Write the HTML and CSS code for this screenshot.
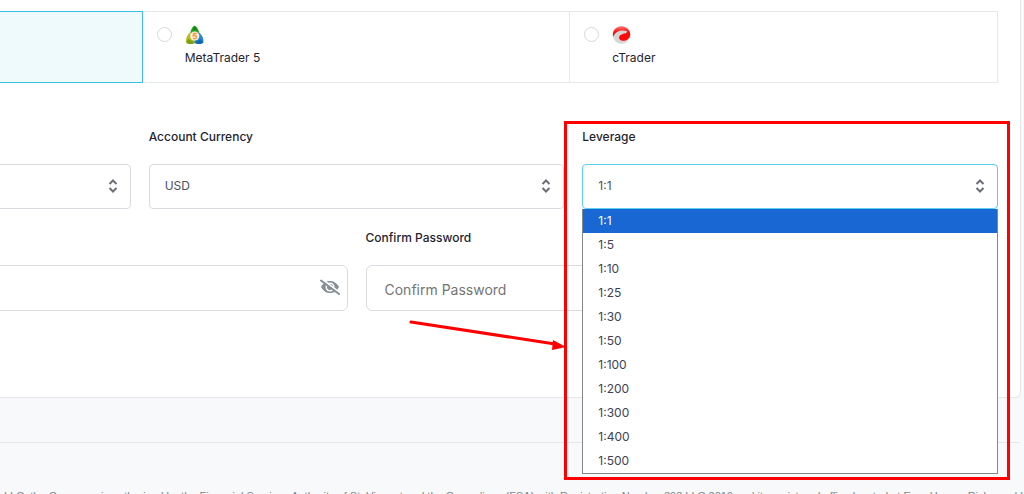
FILE: index.html
```html
<!DOCTYPE html>
<html lang="en">
<head>
    <meta charset="UTF-8">
    <meta name="viewport" content="width=device-width, initial-scale=1.0">
    <title>Open Account</title>
    <link rel="stylesheet" href="styles.css">
</head>
<body>
    <form class="card">
        <div class="platforms">
            <label class="platform active" aria-label="Platform">
                <input type="radio" name="platform" checked>
            </label>
            <label class="platform">
                <input type="radio" name="platform">
                <span class="platform-info">
                    <svg class="logo" viewBox="0 0 20 20">
                        <path d="M9.500 .8C7.500 1 5 6 5.200 10H14.500C14.500 6 11.500 .8 9.500 .8Z" fill="#2fa82b"/>
                        <path d="M7 5.500L9.500 .8L13.500 6.500L10 5Z" fill="#13870f"/>
                        <path d="M5 7.500C1.500 11 .3 15 1.300 17.500C3.500 19.500 7.500 19.300 10 18L9.500 9Z" fill="#b4bd1c"/>
                        <path d="M1.300 17.500L3 14L8 16.500L9.500 18.200C7 19.300 3.500 19.500 1.300 17.500Z" fill="#7d9f14"/>
                        <path d="M14 7.500C17.500 10.500 19 14 18.300 17.500C16 19.500 12 19.300 9.500 17.800L10 9Z" fill="#2489d8"/>
                        <path d="M18.300 17.500L16 14L11 16.500L10 18C12.500 19.300 16 19.500 18.300 17.500Z" fill="#1068b4"/>
                        <circle cx="9.700" cy="11" r="4.600" fill="#f8f1e8"/>
                        <path d="M11.800 8.500H8.600L8.300 10.800C10.300 10 11.800 10.900 11.500 12.300C11.200 13.800 9.200 14 8 13.200" fill="none" stroke="#f39a3c" stroke-width="1.500"/>
                    </svg>
                    MetaTrader 5
                </span>
            </label>
            <label class="platform">
                <input type="radio" name="platform">
                <span class="platform-info">
                    <svg class="logo" viewBox="0 0 20 20">
                        <defs>
                            <linearGradient id="ball" x1="0" y1="0" x2="0" y2="1">
                                <stop offset="0" stop-color="#f77"/>
                                <stop offset=".5" stop-color="#fa1010"/>
                            </linearGradient>
                        </defs>
                        <circle cx="9.500" cy="10" r="8.700" fill="#d6d6d6"/>
                        <path d="M.8 10C.8 5 4.500 1.300 9.500 1.300C14.500 1.300 18.200 5 18.200 9.500C18.200 10.500 18 11.500 17.500 12.500L15.500 6.500C9 4 3.500 6 1 12Z" fill="url(#ball)"/>
                        <path d="M15.500 6L18.200 9C18.400 13 15 16 11 15.800C8 15.700 6.500 13.500 7.300 11.500C8.200 9.300 12 9 14.500 7.800Z" fill="#fa0a0a"/>
                    </svg>
                    cTrader
                </span>
            </label>
        </div>

        <div class="row thirds">
            <div class="field">
                <div class="control">
                    <select aria-label="Account Type"><option></option></select>
                    <svg class="arrows" viewBox="0 0 10 14"><path d="M1.500 5L5 1.500L8.500 5M1.500 9L5 12.500L8.500 9"/></svg>
                </div>
            </div>
            <div class="field">
                <label for="currency">Account Currency</label>
                <div class="control">
                    <select id="currency"><option>USD</option></select>
                    <svg class="arrows" viewBox="0 0 10 14"><path d="M1.500 5L5 1.500L8.500 5M1.500 9L5 12.500L8.500 9"/></svg>
                </div>
            </div>
            <div class="field highlight">
                <label for="leverage">Leverage</label>
                <div class="control">
                    <select id="leverage" class="open"><option>1:1</option></select>
                    <svg class="arrows" viewBox="0 0 10 14"><path d="M1.500 5L5 1.500L8.500 5M1.500 9L5 12.500L8.500 9"/></svg>
                    <ul class="options" role="listbox" aria-label="Leverage">
                        <li role="option" class="selected" aria-selected="true">1:1</li>
                        <li role="option">1:5</li>
                        <li role="option">1:10</li>
                        <li role="option">1:25</li>
                        <li role="option">1:30</li>
                        <li role="option">1:50</li>
                        <li role="option">1:100</li>
                        <li role="option">1:200</li>
                        <li role="option">1:300</li>
                        <li role="option">1:400</li>
                        <li role="option">1:500</li>
                    </ul>
                </div>
                <svg class="pointer" viewBox="0 0 160 40">
                    <path d="M3 6L147 28" fill="none" stroke="#ff0000" stroke-width="3" stroke-linecap="round"/>
                    <path d="M145 24L158 31L144 34Z" fill="#ff0000"/>
                </svg>
            </div>
        </div>

        <div class="row halves">
            <div class="field">
                <div class="control">
                    <input type="password" aria-label="Password">
                    <button type="button" class="toggle" aria-label="Show password">
                        <svg viewBox="0 0 20 16">
                            <path d="M1 8C4 3 7 2 10 2S16 3 19 8C16 13 13 14 10 14S4 13 1 8Z" fill="#868e96"/>
                            <circle cx="10" cy="8" r="4.500" fill="#fff"/>
                            <circle cx="10" cy="8" r="3" fill="#868e96"/>
                            <path d="M1 -.5L20 14" stroke="#fff" stroke-width="2"/>
                            <path d="M1 1.500L19 15" stroke="#868e96" stroke-width="2" stroke-linecap="round"/>
                        </svg>
                    </button>
                </div>
            </div>
            <div class="field">
                <label for="confirm">Confirm Password</label>
                <div class="control">
                    <input type="password" id="confirm" placeholder="Confirm Password">
                </div>
            </div>
        </div>
    </form>

    <footer class="footer">
        <p>LLC, the Company, is authorised by the Financial Services Authority of St. Vincent and the Grenadines (FSA) with Registration Number 393 LLC 2019 and its registered office located at Euro House, Richmond Hill</p>
    </footer>
</body>
</html>
```

FILE: styles.css
```css
body {
    margin: 0;
    height: 100vh;
    overflow: hidden;
    background-color: #f8f9fb;
    font-family: Inter, 'Liberation Sans', sans-serif;
    font-size: 12px;
    color: #1f2430;
}

/* the form runs on past the left edge of the window */
.card {
    margin: 0 3px 0 -308px;
    padding: 11px 22px 86px;
    background-color: #fff;
    border: 1px solid #e5e7eb;
    border-top: none;
    border-radius: 0 0 6px 6px;
}

.platforms {
    display: grid;
    grid-template-columns: repeat(3, 1fr);
}

.platform {
    display: flex;
    align-items: flex-start;
    gap: 13px;
    min-height: 72px;
    padding: 13px 14px;
    box-sizing: border-box;
    border: 1px solid #e5e7eb;
    border-left: none;
}

.platform.active {
    background-color: #effafd;
    border: 1px solid #3fbdea;
}

.platform input {
    appearance: none;
    width: 15px;
    height: 15px;
    margin: 2px 0 0;
    border: 1px solid #d5d8df;
    border-radius: 50%;
}

.platform.active input {
    border: 4px solid #3fbdea;
}

.platform-info {
    display: flex;
    flex-direction: column;
    gap: 4px;
    line-height: 18px;
}

.logo {
    width: 20px;
    height: 20px;
}

.row {
    display: grid;
    align-items: end;
    gap: 18px;
}

.thirds {
    grid-template-columns: repeat(3, 1fr);
    margin-top: 45px;
}

.halves {
    grid-template-columns: repeat(2, 1fr);
    margin-top: 20px;
}

.field {
    position: relative;
}

.field > label {
    display: block;
    margin-bottom: 18px;
    line-height: 18px;
    font-weight: 500;
}

.control {
    position: relative;
}

.control select,
.control input {
    display: block;
    width: 100%;
    height: 45px;
    padding: 0 15px 2px;
    box-sizing: border-box;
    appearance: none;
    background-color: #fff;
    border: 1px solid #d9dbe1;
    border-radius: 4px;
    outline: none;
    font-family: inherit;
    font-size: 12px;
    color: #4a5060;
}

.control input {
    height: 46px;
    padding: 3px 18px 0;
    border-radius: 6px;
    font-size: 14px;
}

.control input::placeholder {
    color: #757575;
}

.control select.open {
    border-color: #5ccdf5;
}

.arrows {
    position: absolute;
    top: 15px;
    right: 13px;
    width: 10px;
    height: 14px;
    fill: none;
    stroke: #6b6f76;
    stroke-width: 2;
}

.toggle {
    position: absolute;
    top: 14px;
    right: 8px;
    padding: 0;
    border: none;
    background: none;
}

.toggle svg {
    display: block;
    width: 20px;
    height: 16px;
}

.options {
    position: absolute;
    z-index: 2;
    top: 100%;
    left: 0;
    right: 0;
    margin: 0;
    padding: 0;
    list-style: none;
    background-color: #fff;
    border: 1px solid #85878b;
    border-top: none;
}

.options li {
    height: 24px;
    padding: 0 15px;
    line-height: 24px;
    color: #3c4254;
}

.options .selected {
    background-color: #1967d2;
    color: #fff;
}

/* red frame and arrow that call out the leverage field */
.highlight::before {
    content: "";
    position: absolute;
    z-index: 3;
    top: -7px;
    left: -18px;
    right: -12px;
    height: 353px;
    border: 3px solid #ff0000;
    pointer-events: none;
}

.pointer {
    position: absolute;
    z-index: 3;
    top: 188px;
    right: 430px;
    width: 160px;
    height: 40px;
}

.footer {
    margin-top: 44px;
    margin-right: 4px;
    padding-top: 45px;
    border-top: 1px solid #e5e7eb;
}

.footer p {
    margin: 0;
    padding-left: 4px;
    white-space: nowrap;
    line-height: 16px;
    font-family: 'Liberation Sans', Arial, sans-serif;
    font-size: 11px;
    color: #7d828c;
}
```
